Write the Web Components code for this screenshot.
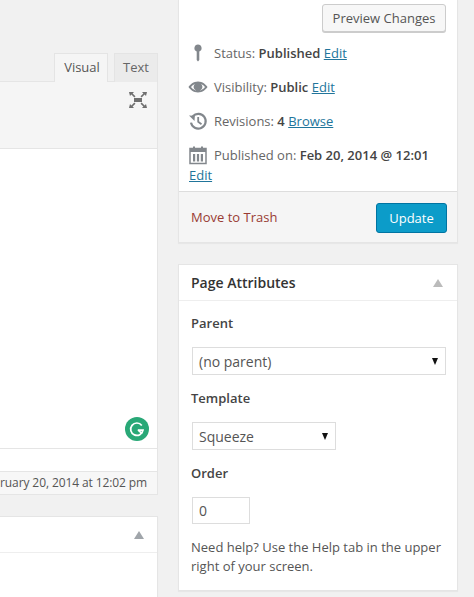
<!DOCTYPE html>
<html>
<head>
<meta charset="utf-8">
<title>Edit Page</title>
<style>
  html, body { margin: 0; height: 597px; overflow: hidden; background: #f1f1f1; }
  body { font: 13px/20px "Open Sans", sans-serif; color: #444; }
</style>
</head>
<body>
<wp-screen>
  <editor-column slot="left"></editor-column>
  <side-column slot="right"></side-column>
</wp-screen>

<script>
class WpScreen extends HTMLElement {
  connectedCallback() {
    const shadowRoot = this.attachShadow({ mode: "open" });
    shadowRoot.innerHTML = `
    <style>
      :host { display: flex; width: 474px; height: 597px; overflow: hidden; }
      .left { display: block; width: 158px; flex: none; }
      .right { display: block; width: 280px; flex: none; margin-left: 20px; }
    </style>
    <div class="left"><slot name="left"></slot></div>
    <div class="right"><slot name="right"></slot></div>
    `;
  }
}

class EditorColumn extends HTMLElement {
  connectedCallback() {
    const shadowRoot = this.attachShadow({ mode: "open" });
    shadowRoot.innerHTML = `
    <style>
      :host { display: block; padding-top: 53px; }
      .tabs { display: flex; justify-content: flex-end; gap: 6px; height: 28px; box-sizing: border-box; }
      .tab {
        box-sizing: border-box; height: 29px; padding: 2px 0 0; font-size: 13px; line-height: 22px;
        color: #666; background: #ebebeb; border: 1px solid #e4e4e4; border-bottom: 0; position: relative; text-align: center;
      }
      .tab.on { background: #f5f5f5; color: #555; z-index: 1; width: 54px; padding-left: 2px; }
      .tab.off { width: 44px; }
      .editor { border: 1px solid #e5e5e5; border-left: 0; }
      .toolbar { background: #f5f5f5; border-bottom: 1px solid #e5e5e5; display: flex; justify-content: flex-end; padding: 10px 10px 0 0; height: 56px; }
      .toolbar svg { display: block; }
      .content { height: 299px; background: #fff; display: flex; justify-content: flex-end; align-items: flex-end; padding: 0 8px 7px 0; box-sizing: border-box; }
      .wordrow { height: 22px; background: #fff; border-top: 1px solid #e5e5e5; }
      .stamp {
        height: 22px; background: #f7f7f7; border-top: 1px solid #e5e5e5; font-size: 12px; line-height: 21px; color: #555;
        text-align: right; padding-right: 10px; white-space: nowrap; letter-spacing: -0.1px;
      }
      .box { margin-top: 21px; height: 90px; background: #fff; border: 1px solid #e5e5e5; border-left: 0; box-shadow: 0 1px 1px rgba(0,0,0,.04); }
      .head { height: 35px; border-bottom: 1px solid #eee; display: flex; justify-content: flex-end; align-items: center; padding-right: 13px; }
      .tri { width: 0; height: 0; border: 5px solid transparent; border-top: 0; border-bottom: 8px solid #a0a5aa; }
    </style>
    <div class="tabs">
      <div class="tab on">Visual</div>
      <div class="tab off">Text</div>
    </div>
    <div class="editor">
      <div class="toolbar">
        <svg width="18" height="16" viewBox="0 0 18 16" fill="#6f6f6f">
          <rect x="5" y="6" width="8" height="4"/>
          <path d="M0 0h5L3.600 1.400 6.500 4.300 5.300 5.500 2.400 2.600 1 4zM18 0h-5l1.400 1.400-2.900 2.900 1.200 1.200 2.900-2.900L17 4zM0 16h5l-1.400-1.400 2.900-2.900-1.200-1.200-2.900 2.900L1 12zM18 16h-5l1.400-1.400-2.900-2.900 1.200-1.200 2.900 2.900L17 12z"/>
        </svg>
      </div>
      <div class="content">
        <svg width="24" height="24" viewBox="0 0 24 24">
          <circle cx="12" cy="12" r="12" fill="#29a877"/>
          <path d="M16.800 8.400A6.200 6.200 0 1 0 18 13.200H12.800" fill="none" stroke="#fff" stroke-width="1.700"/>
          <path d="M13.200 13.200l3.900 3.500" fill="none" stroke="#fff" stroke-width="1.700"/>
        </svg>
      </div>
      <div class="wordrow"></div>
      <div class="stamp">ruary 20, 2014 at 12:02 pm</div>
    </div>
    <div class="box"><div class="head"><span class="tri"></span></div></div>
    `;
  }
}

class MiscRow extends HTMLElement {
  connectedCallback() {
    const icons = {
      pin: `<path d="M10 1.500a3.600 3.600 0 0 1 1.300 6.950V17l-1.300 1.500L8.700 17V8.450A3.600 3.600 0 0 1 10 1.500z" fill="#82878c"/>`,
      eye: `<path d="M10 4.500c4.500 0 8 3.100 9.500 5.500-1.500 2.400-5 5.500-9.500 5.500S2 12.400.5 10C2 7.600 5.500 4.500 10 4.500zM3 10c1.500 1.900 3.900 3.800 7 3.800s5.500-1.900 7-3.800c-1-1.300-2.300-2.400-3.900-3.100a4.200 4.200 0 1 1-6.200 0C5.300 7.600 4 8.700 3 10z" fill="#82878c"/>`,
      history: `<path d="M4.800 5.200A7.400 7.400 0 1 1 3 11.600" fill="none" stroke="#82878c" stroke-width="2.200"/><path d="M1 4.500l5.800.3-.3 5.200z" fill="#82878c"/><path d="M10.200 6v4.800l3.300 2.400" fill="none" stroke="#82878c" stroke-width="1.800"/>`,
      cal: `<path d="M2 3.500h16v15H2z" fill="none" stroke="#82878c" stroke-width="1.500"/><path d="M2 3.500h16v3.500H2z" fill="#82878c"/><path d="M5 1.500h2v3.500H5zM13 1.500h2v3.500h-2zM5 9h2.200v7.500H5zM8.900 9h2.200v7.500H8.900zM12.800 9H15v7.500h-2.200z" fill="#82878c"/>`
    };
    const shadowRoot = this.attachShadow({ mode: "open" });
    shadowRoot.innerHTML = `
    <style>
      :host { display: block; font-size: 13px; line-height: 20px; color: #666; padding: 0 0 14px 35px; position: relative; }
      svg { position: absolute; left: 9px; top: 0; width: 20px; height: 20px; }
    </style>
    <svg viewBox="0 0 20 20">${icons[this.getAttribute("icon")]}</svg><slot></slot>
    `;
  }
}

class WpPostbox extends HTMLElement {
  connectedCallback() {
    const shadowRoot = this.attachShadow({ mode: "open" });
    shadowRoot.innerHTML = `
    <style>
      :host { display: block; background: #fff; border: 1px solid #e5e5e5; box-shadow: 0 1px 1px rgba(0,0,0,.04); }
      .head { display: flex; justify-content: space-between; align-items: center; height: 35px; padding: 0 14px 0 12px; border-bottom: 1px solid #eee; font-size: 14px; color: #333; }
      .tri { width: 0; height: 0; border: 5px solid transparent; border-top: 0; border-bottom: 8px solid #bbb; }
    </style>
    <div class="head"><slot name="title"></slot><span class="tri"></span></div>
    <slot></slot>
    `;
  }
}

class FakeSelect extends HTMLElement {
  connectedCallback() {
    const shadowRoot = this.attachShadow({ mode: "open" });
    shadowRoot.innerHTML = `
    <style>
      :host { display: flex; align-items: center; justify-content: space-between; box-sizing: border-box; height: 28px; padding: 1px 7px 0 6px; background: #fff; border: 1px solid #ddd; font-size: 14px; color: #555; }
      i { width: 0; height: 0; border: 3.500px solid transparent; border-bottom: 0; border-top: 7px solid #111; }
    </style>
    <slot></slot><i></i>
    `;
  }
}

class SideColumn extends HTMLElement {
  connectedCallback() {
    const shadowRoot = this.attachShadow({ mode: "open" });
    shadowRoot.innerHTML = `
    <style>
      :host { display: block; }
      .publish { background: #fff; border: 1px solid #e5e5e5; border-top: 0; box-shadow: 0 1px 1px rgba(0,0,0,.04); }
      .preview { display: flex; justify-content: flex-end; padding: 4px 11px 11px 0; }
      .btn { box-sizing: border-box; height: 28px; border: 1px solid #ccc; border-radius: 3px; background: #f7f7f7; box-shadow: 0 1px 0 #ccc; font-size: 13px; line-height: 26px; color: #555; width: 124px; text-align: center; }
      a { color: #21759b; text-decoration: underline; }
      b { font-weight: 600; color: #444; }
      .date { padding-bottom: 7px; }
      .dateedit { padding: 0 0 6px 10px; margin-top: -7px; font-size: 13px; }
      .actions { display: flex; justify-content: space-between; align-items: flex-start; height: 51px; box-sizing: border-box; padding: 11px 10px 0 12px; background: #f5f5f5; border-top: 1px solid #ddd; }
      .trash { color: #993b33; font-size: 13px; line-height: 28px; }
      .update { box-sizing: border-box; width: 71px; height: 30px; border: 1px solid #0074a2; border-radius: 3px; background: #0c9cc9; color: #fff; font-size: 13px; line-height: 29px; text-align: center; }
      wp-postbox { margin-top: 21px; }
      .body { padding: 12px 12px 14px; }
      .lbl { font-size: 13px; font-weight: 600; line-height: 20px; color: #444; }
      fake-select { margin: 14px 0 0 1px; }
      .parent { margin-bottom: 13px; margin-right: -1px; }
      .tpl { width: 144px; margin-bottom: 13px; }
      .num { box-sizing: border-box; width: 58px; height: 27px; margin: 14px 0 0 1px; padding: 0 6px; background: #fff; border: 1px solid #ddd; font-size: 14px; line-height: 26px; color: #555; }
      .help { margin-top: 14px; font-size: 13px; line-height: 19px; color: #555; }
      .title { font-weight: 600; }
    </style>
    <div class="publish">
      <div class="preview"><div class="btn">Preview Changes</div></div>
      <div>
        <misc-row icon="pin">Status: <b>Published</b> <a href="#">Edit</a></misc-row>
        <misc-row icon="eye">Visibility: <b>Public</b> <a href="#">Edit</a></misc-row>
        <misc-row icon="history">Revisions: <b>4</b> <a href="#">Browse</a></misc-row>
        <misc-row class="date" icon="cal">Published on: <b>Feb 20, 2014 @ 12:01</b></misc-row>
        <div class="dateedit"><a href="#">Edit</a></div>
      </div>
      <div class="actions">
        <span class="trash">Move to Trash</span>
        <div class="update">Update</div>
      </div>
    </div>
    <wp-postbox>
      <span slot="title" class="title">Page Attributes</span>
      <div class="body">
        <div class="lbl">Parent</div>
        <fake-select class="parent">(no parent)</fake-select>
        <div class="lbl">Template</div>
        <fake-select class="tpl">Squeeze</fake-select>
        <div class="lbl">Order</div>
        <div class="num">0</div>
        <div class="help">Need help? Use the Help tab in the upper right of your screen.</div>
      </div>
    </wp-postbox>
    `;
  }
}

customElements.define("wp-screen", WpScreen);
customElements.define("editor-column", EditorColumn);
customElements.define("misc-row", MiscRow);
customElements.define("wp-postbox", WpPostbox);
customElements.define("fake-select", FakeSelect);
customElements.define("side-column", SideColumn);
</script>
</body>
</html>
